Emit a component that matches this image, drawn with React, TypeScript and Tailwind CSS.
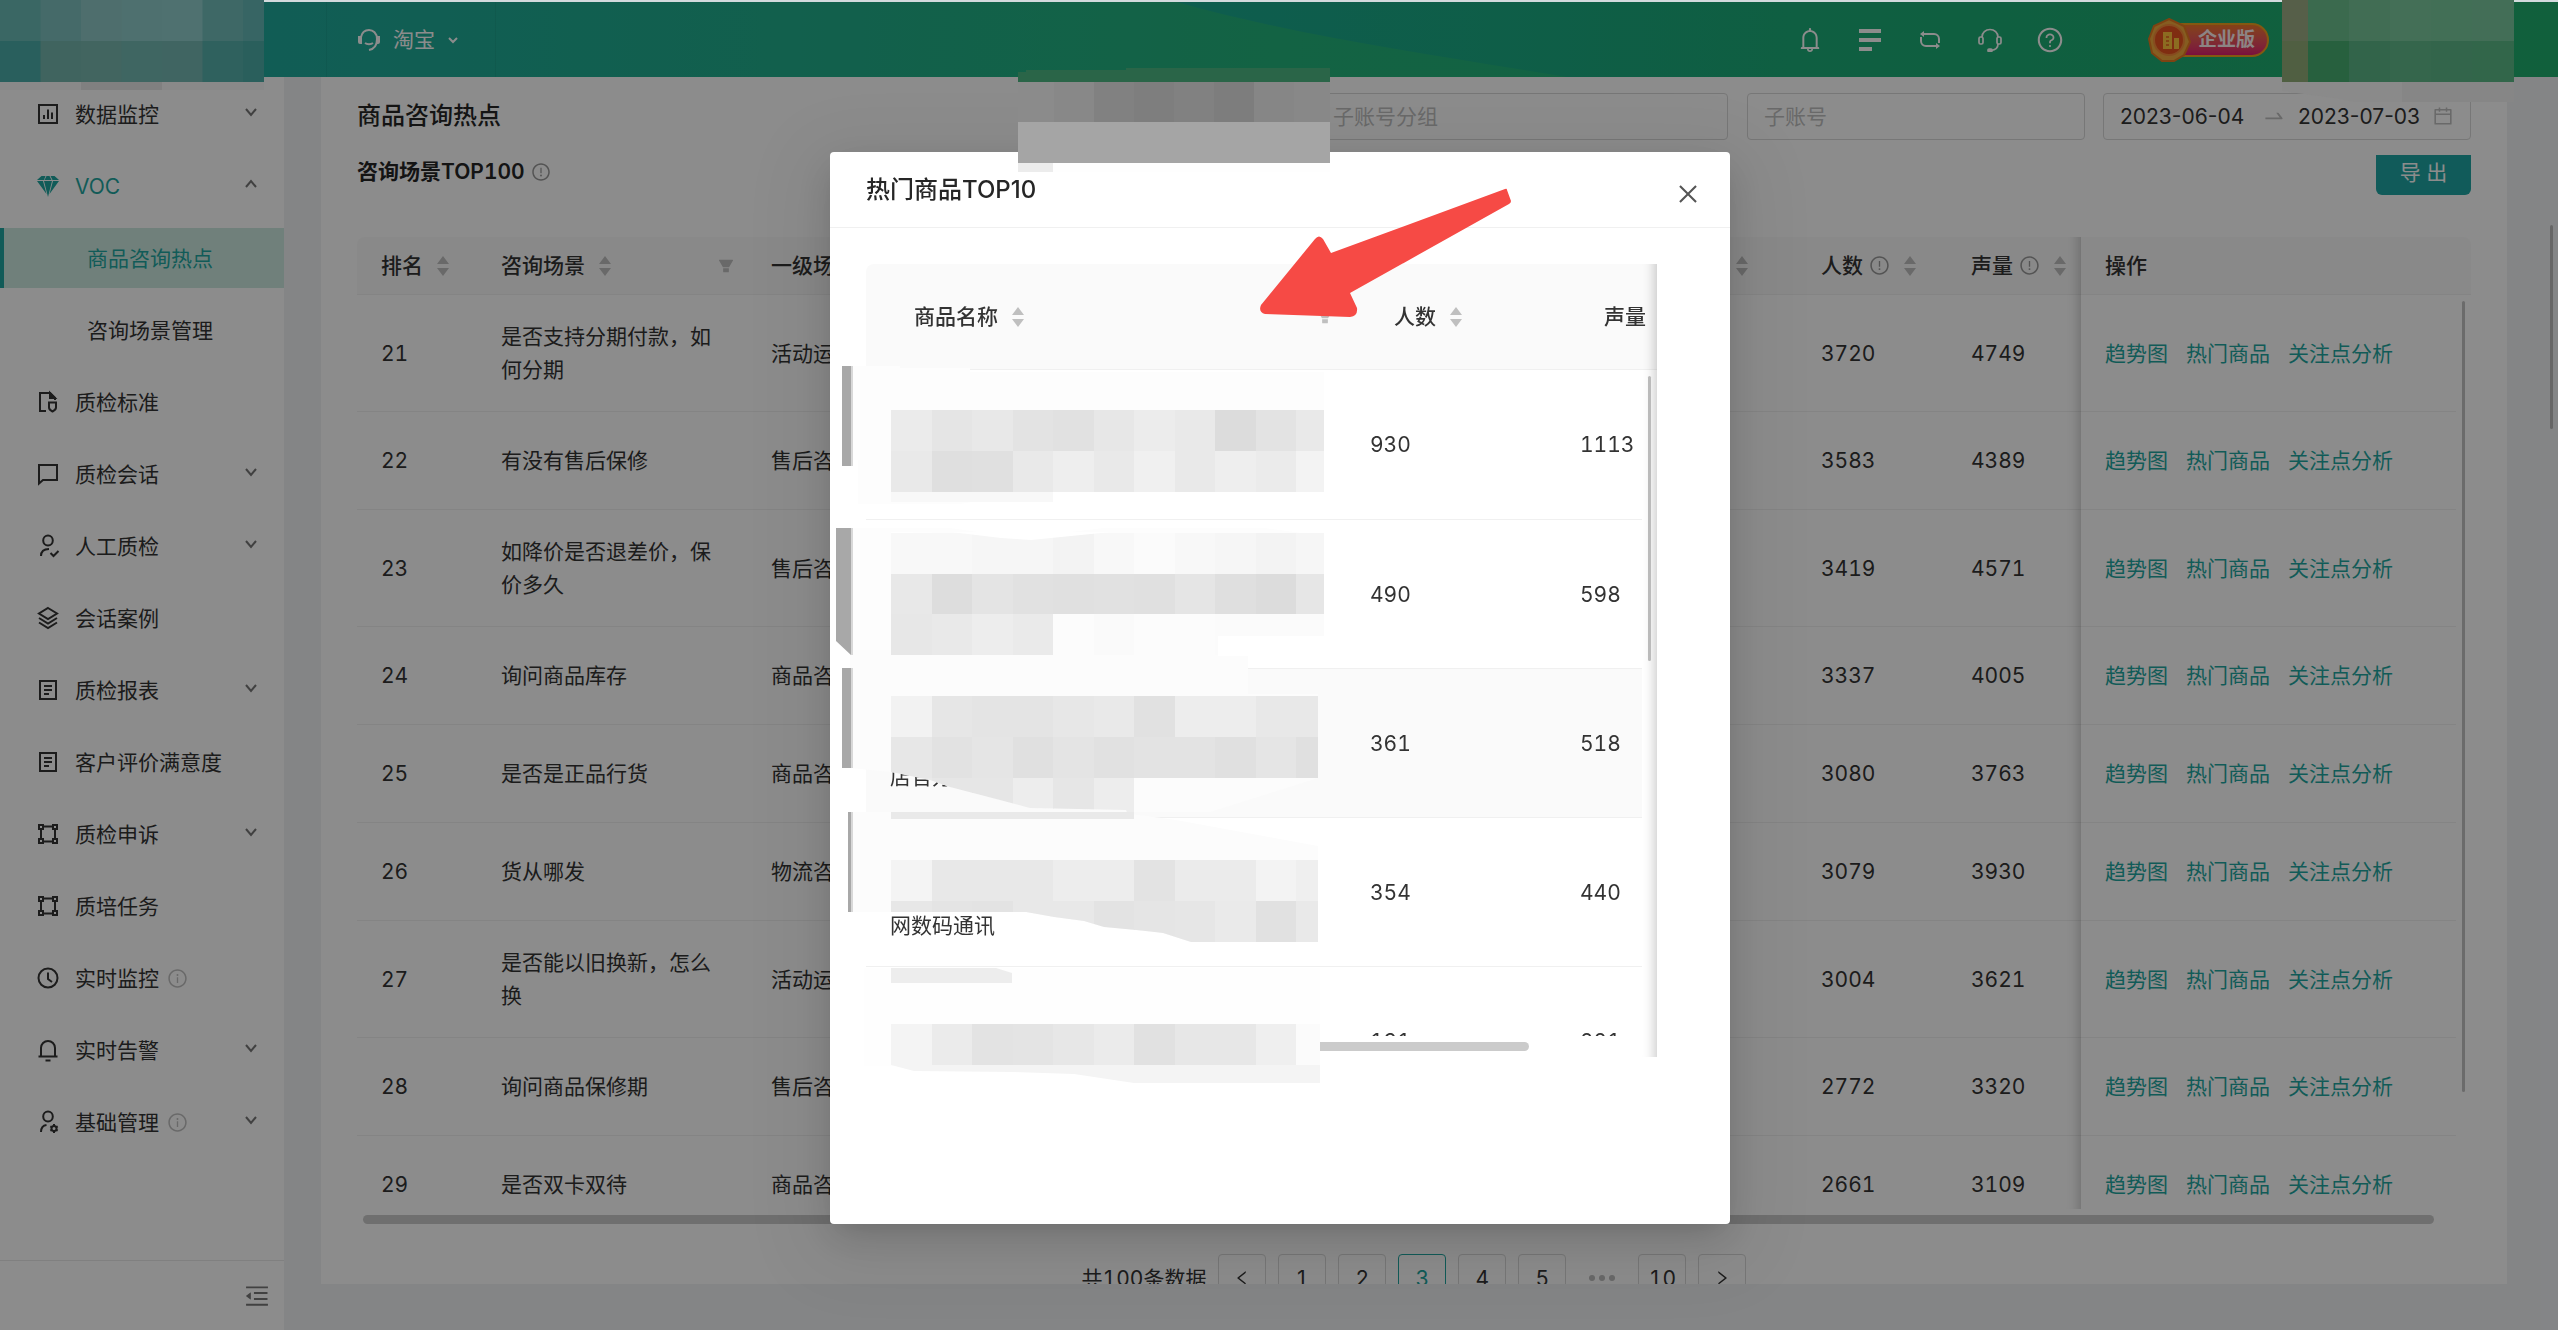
import type { ReactNode } from 'react'
import {
  AiFillFilter,
  AiOutlineBell,
  AiOutlineCalendar,
  AiOutlineClose,
  AiOutlineExclamationCircle,
  AiOutlineInfoCircle,
  AiOutlineLeft,
  AiOutlineMenuFold,
  AiOutlineQuestionCircle,
  AiOutlineRight,
  AiOutlineSwapRight,
} from 'react-icons/ai'

type IconName = 'chart' | 'gem' | 'shield' | 'chat' | 'userCheck' | 'stack' | 'doc' | 'shape' | 'clock' | 'bell' | 'userGear'

interface NavItem {
  label: string
  icon?: IconName
  arrow?: 'up' | 'down'
  info?: boolean
  active?: boolean
}

const NAV: NavItem[] = [
  { label: '数据监控', icon: 'chart', arrow: 'down' },
  { label: 'VOC', icon: 'gem', arrow: 'up', active: true },
  { label: '商品咨询热点', active: true },
  { label: '咨询场景管理' },
  { label: '质检标准', icon: 'shield' },
  { label: '质检会话', icon: 'chat', arrow: 'down' },
  { label: '人工质检', icon: 'userCheck', arrow: 'down' },
  { label: '会话案例', icon: 'stack' },
  { label: '质检报表', icon: 'doc', arrow: 'down' },
  { label: '客户评价满意度', icon: 'doc' },
  { label: '质检申诉', icon: 'shape', arrow: 'down' },
  { label: '质培任务', icon: 'shape' },
  { label: '实时监控', icon: 'clock', info: true },
  { label: '实时告警', icon: 'bell', arrow: 'down' },
  { label: '基础管理', icon: 'userGear', arrow: 'down', info: true },
]

const ROWS = [
  { rank: 21, scene: '是否支持分期付款，如何分期', parent: '活动运营', people: 3720, volume: 4749, tall: true },
  { rank: 22, scene: '有没有售后保修', parent: '售后咨询', people: 3583, volume: 4389 },
  { rank: 23, scene: '如降价是否退差价，保价多久', parent: '售后咨询', people: 3419, volume: 4571, tall: true },
  { rank: 24, scene: '询问商品库存', parent: '商品咨询', people: 3337, volume: 4005 },
  { rank: 25, scene: '是否是正品行货', parent: '商品咨询', people: 3080, volume: 3763 },
  { rank: 26, scene: '货从哪发', parent: '物流咨询', people: 3079, volume: 3930 },
  { rank: 27, scene: '是否能以旧换新，怎么换', parent: '活动运营', people: 3004, volume: 3621, tall: true },
  { rank: 28, scene: '询问商品保修期', parent: '售后咨询', people: 2772, volume: 3320 },
  { rank: 29, scene: '是否双卡双待', parent: '商品咨询', people: 2661, volume: 3109 },
]

const PRODUCTS = [
  { name: '', people: 930, volume: 1113 },
  { name: '', people: 490, volume: 598 },
  { name: '店官方', people: 361, volume: 518 },
  { name: '网数码通讯', people: 354, volume: 440 },
  { name: '', people: 191, volume: 221 },
]

const ICONS: Record<IconName, ReactNode> = {
  chart: (
    <>
      <rect x="3" y="3" width="18" height="18" />
      <path d="M8 13v4M12 7.500v9.500M16 10.500v6.500" />
    </>
  ),
  gem: (
    <g fill="currentColor" stroke="none">
      <path d="M5.500 2h4L8 6H1zM10.500 2h3l2 4h-7zM14.500 2h4L23 6h-6.500zM1 7h6l3.500 13zM8 7h8l-4 16zM17 7h6l-9.500 13z" />
    </g>
  ),
  shield: (
    <>
      <path d="M10 21H4V3h10l5 5v2" />
      <path d="M14 3v5h5z" fill="currentColor" />
      <path d="M13 12.500h7v5c0 2-1.500 3-3.500 4-2-1-3.500-2-3.500-4z" />
    </>
  ),
  chat: <path d="M3 3h18v15H7l-4 3.500z" />,
  userCheck: (
    <>
      <ellipse cx="12" cy="6.500" rx="4.800" ry="5" />
      <path d="M5 22c0-4.500 3-7 8-7M14.500 19l3 3 5-5" />
    </>
  ),
  stack: (
    <>
      <path d="M12 2l9 5.500-9 5.500-9-5.500z" />
      <path d="M3 12l9 5.500 9-5.500M3 16.500L12 22l9-5.500" />
    </>
  ),
  doc: (
    <>
      <rect x="4" y="3" width="16" height="18" />
      <path d="M8 8h8M8 12h8M8 16h5" />
    </>
  ),
  shape: (
    <>
      <path d="M7 4.500h10M7 19.500h10M5 7v10M19 7v10" />
      <path d="M3 3h4v4H3zM17 3h4v4h-4zM3 17h4v4H3zM17 17h4v4h-4z" />
    </>
  ),
  clock: (
    <>
      <circle cx="12" cy="12" r="9.500" />
      <path d="M12 6.500V13l4 3" />
    </>
  ),
  bell: (
    <>
      <path d="M5 18v-8a7 7 0 0 1 14 0v8M2.500 18.500h19" />
      <path d="M9.500 22.500h5" />
    </>
  ),
  userGear: (
    <>
      <ellipse cx="12" cy="6.500" rx="4.800" ry="5" />
      <path d="M5 22c0-4 2-6.500 5.500-7" />
      <circle cx="18" cy="18.500" r="2.500" />
      <path d="M18 14v2M18 21v2M14.300 16.300l1.500.9M20.200 19.800l1.500.9M21.700 16.300l-1.500.9M15.800 19.800l-1.500.9" />
    </>
  ),
}

function SideIcon({ name }: { name: IconName }) {
  return (
    <svg viewBox="0 0 24 24" className="h-6 w-6 fill-none stroke-current stroke-2" aria-hidden="true">
      {ICONS[name]}
    </svg>
  )
}

function Sorter() {
  return (
    <svg viewBox="0 0 12 20" className="h-5 w-3 shrink-0 fill-[#bfbfbf]" aria-hidden="true">
      <path d="M6 0l6 8H0zM6 20l6-8H0z" />
    </svg>
  )
}

function Caret({ dir }: { dir: 'up' | 'down' }) {
  return (
    <svg viewBox="0 0 12 12" className="mb-1 ml-auto h-3 w-3 fill-none stroke-[#777] stroke-2" aria-hidden="true">
      <path d={dir === 'down' ? 'M1 3l5 6 5-6' : 'M1 9l5-6 5 6'} />
    </svg>
  )
}

function Headset() {
  return (
    <svg viewBox="0 0 24 24" className="h-6 w-6 fill-none stroke-current stroke-[1.7]" aria-hidden="true">
      <path d="M4 9a8 7.500 0 0 1 16 0" />
      <rect x="1" y="9" width="4" height="7" rx="1.500" />
      <rect x="19" y="9" width="4" height="7" rx="1.500" />
      <path d="M20 16c0 4-2.500 6-7 6.500" />
      <rect x="10" y="21" width="4" height="2.500" rx="1" fill="currentColor" />
    </svg>
  )
}

function Badge() {
  return (
    <div className="flex items-center">
      <svg viewBox="0 0 44 46" className="relative z-10 h-[46px] w-11" aria-hidden="true">
        <path d="M21 2l15 7 6 16-6 13-10 6H14L4 36 1 22l5-13z" fill="#f2a93c" stroke="#e67a22" strokeWidth="2" />
        <circle cx="21" cy="23" r="15" fill="#e8521f" stroke="#f58a3a" strokeWidth="2" />
        <path d="M15 15h9v17h-9zM26 21h5v11h-5z" fill="#ffc53c" />
        <path d="M18 20h3M18 24h3M18 28h3" stroke="#e8601f" strokeWidth="1.500" />
      </svg>
      <span className="-ml-9 rounded-full border-2 border-[#f0a020] bg-linear-to-b from-[#f07828] to-[#e01870] pr-3 pl-10 text-[19px] leading-[30px] font-bold text-[#fff0f0]">
        企业版
      </span>
    </div>
  )
}

function Header() {
  return (
    <header className="relative z-10 flex h-[75px] shrink-0 items-center bg-linear-to-r from-[#1fa7a4] via-[#24b47c] to-[#21b271] text-white">
      {/* lighter wave across the right half */}
      <svg viewBox="0 0 1380 75" preserveAspectRatio="none" className="absolute top-0 right-0 h-full w-[54%]" aria-hidden="true">
        <defs>
          <linearGradient id="wave">
            <stop offset="0" stopColor="#1ba990" />
            <stop offset="0.450" stopColor="#1cad78" />
            <stop offset="1" stopColor="#20b06e" />
          </linearGradient>
        </defs>
        <path d="M0 0h1380v75H390C250 52 120 34 0 0z" fill="url(#wave)" />
      </svg>
      <div className="relative ml-[326px] flex h-full w-[170px] items-center border-x border-black/5 pl-[30px]">
        <svg viewBox="0 0 24 24" className="h-6 w-6 fill-none stroke-current stroke-2" aria-hidden="true">
          <path d="M4 9c1-4.500 4-7 8-7s8 3 8 9c0 6-3 10-8 11" />
          <path d="M1 8h4v8H3a2 2 0 0 1-2-2zM23 8h-3v8h1a2 2 0 0 0 2-2z" fill="currentColor" stroke="none" />
          <path d="M8 15c2 1.500 6 1.500 8 0" />
        </svg>
        <button className="ml-3 flex items-center gap-3">
          淘宝
          <svg viewBox="0 0 12 12" className="h-3 w-3 fill-none stroke-current stroke-2" aria-hidden="true">
            <path d="M2 4l4 4 4-4" />
          </svg>
        </button>
      </div>
      <div className="relative mr-[289px] ml-auto flex items-center gap-8">
        <button aria-label="通知"><AiOutlineBell size={28} /></button>
        <button aria-label="列表" className="w-7">
          <svg viewBox="0 0 24 24" className="mx-auto h-6 w-6 fill-current" aria-hidden="true">
            <path d="M1 1h22v4H1zM1 10h22v4H1zM1 19h13v4H1z" />
          </svg>
        </button>
        <button aria-label="切换" className="w-7">
          <svg viewBox="0 0 24 24" className="mx-auto h-6 w-6 fill-none stroke-current stroke-2" aria-hidden="true">
            <path d="M5 6h11a5 5 0 0 1 5 5v4M19 18H8a5 5 0 0 1-5-5V9" />
            <path d="M6 3v6L2 6zM18 15v6l4-3z" fill="currentColor" stroke="none" />
          </svg>
        </button>
        <button aria-label="客服" className="flex w-7 justify-center"><Headset /></button>
        <button aria-label="帮助"><AiOutlineQuestionCircle size={28} /></button>
        <div className="ml-13"><Badge /></div>
      </div>
    </header>
  )
}

function Sidebar() {
  return (
    <aside className="flex w-[284px] shrink-0 flex-col bg-white">
      <nav className="flex min-h-0 flex-1 flex-col gap-3 overflow-hidden pt-[7px]">
        {NAV.map((item) => (
          <a
            key={item.label}
            href="#"
            className={`flex h-15 shrink-0 items-center pr-[27px] ${item.active ? 'text-[#1fa7a0]' : 'text-[#333]'} ${
              item.icon ? 'pl-9' : item.active ? 'border-l-4 border-[#1fa7a0] bg-[#cce9e1] pl-[83px]' : 'pl-[87px]'
            }`}
          >
            {item.icon && <SideIcon name={item.icon} />}
            <span className={item.icon ? 'ml-[15px]' : ''}>{item.label}</span>
            {item.info && <AiOutlineInfoCircle size={21} className="ml-2 text-[#c0c0c0]" />}
            {item.arrow && <Caret dir={item.arrow} />}
          </a>
        ))}
      </nav>
      <div className="flex h-[70px] shrink-0 items-center justify-end border-t border-[#eaeaea] pr-[13px]">
        <button aria-label="收起菜单" className="text-[#777]"><AiOutlineMenuFold size={28} /></button>
      </div>
    </aside>
  )
}

function Filters() {
  return (
    <div className="flex h-[78px] shrink-0 items-center">
      <h1 className="mr-auto text-2xl font-medium text-[#262626]">商品咨询热点</h1>
      <input
        aria-label="子账号分组"
        placeholder="子账号分组"
        className="mr-[19px] h-[47px] w-[411px] rounded-sm border border-[#d9d9d9] px-[15px] placeholder:text-[#bfbfbf]"
      />
      <input
        aria-label="子账号"
        placeholder="子账号"
        className="mr-[18px] h-[47px] w-[338px] rounded-sm border border-[#d9d9d9] px-4 placeholder:text-[#bfbfbf]"
      />
      <div className="flex h-[47px] w-[368px] items-center rounded-sm border border-[#d9d9d9] px-4 normal-nums">
        <input aria-label="开始日期" defaultValue="2023-06-04" className="w-[142px]" />
        <AiOutlineSwapRight size={24} className="mr-3 shrink-0 text-[#bfbfbf]" />
        <input aria-label="结束日期" defaultValue="2023-07-03" className="w-[132px]" />
        <AiOutlineCalendar size={22} className="ml-auto shrink-0 text-[#bfbfbf]" />
      </div>
    </div>
  )
}

function SceneTable() {
  const th = 'border-b border-[#f0f0f0] bg-[#fafafa] pl-6 text-left font-medium'
  const td = 'border-b border-[#f0f0f0] pl-6'
  return (
    <div className="relative min-h-0 flex-1 overflow-hidden">
      <table className="w-full table-fixed border-separate border-spacing-0">
        <colgroup>
          <col className="w-[120px]" />
          <col className="w-[270px]" />
          <col className="w-[300px]" />
          <col />
          <col className="w-[150px]" />
          <col className="w-[134px]" />
          <col className="w-[375px]" />
          <col className="w-[15px]" />
        </colgroup>
        <thead>
          <tr className="h-[58px] whitespace-nowrap">
            <th className={`${th} rounded-tl-lg`}><span className="flex items-center gap-[14px]">排名<Sorter /></span></th>
            <th className={th}>
              <span className="flex items-center gap-[14px] pr-3">
                咨询场景<Sorter />
                <AiFillFilter size={18} className="ml-auto text-[#bfbfbf]" />
              </span>
            </th>
            <th className={th}>一级场景</th>
            <th className={th}><span className="flex justify-end pr-[49px]"><Sorter /></span></th>
            <th className={th}>
              <span className="flex items-center">
                人数<AiOutlineExclamationCircle size={21} className="mr-[14px] ml-1.5 text-[#999]" /><Sorter />
              </span>
            </th>
            <th className={th}>
              <span className="flex items-center">
                声量<AiOutlineExclamationCircle size={21} className="mr-[14px] ml-1.5 text-[#999]" /><Sorter />
              </span>
            </th>
            <th className={th}>操作</th>
            <th className={`${th} rounded-tr-lg`} />
          </tr>
        </thead>
        <tbody>
          {ROWS.map((r) => (
            <tr key={r.rank} className={r.tall ? 'h-[117px]' : 'h-[98px]'}>
              <td className={td}>{r.rank}</td>
              <td className={`${td} pr-8`}>{r.scene}</td>
              <td className={td}>{r.parent}</td>
              <td className={td} />
              <td className={td}>{r.people}</td>
              <td className={td}>{r.volume}</td>
              <td className={td}>
                <span className="flex gap-[18px] text-[#1fa7a0]">
                  <a href="#">趋势图</a>
                  <a href="#">热门商品</a>
                  <a href="#">关注点分析</a>
                </span>
              </td>
              <td />
            </tr>
          ))}
        </tbody>
      </table>
      <div className="pointer-events-none absolute inset-y-0 right-[390px] w-11 shadow-[inset_-15px_0_12px_-12px_rgba(0,0,0,0.2)]" />
      <div className="absolute top-16 right-1.5 h-[791px] w-[3px] rounded-full bg-[#c4c4c4]" />
    </div>
  )
}

function Pagination() {
  const btn = 'flex h-12 w-12 items-center justify-center rounded-sm border'
  return (
    <div className="flex h-[75px] shrink-0 flex-col gap-[30px] overflow-hidden pt-1.5">
      <div className="mr-[37px] ml-1.5 h-[9px] shrink-0 rounded-full bg-[#cbcbcb]" />
      <div className="flex items-center justify-center gap-3">
        <span>共100条数据</span>
        <button aria-label="上一页" className={`${btn} border-[#d9d9d9]`}><AiOutlineLeft size={18} /></button>
        {[1, 2, 3, 4, 5].map((n) => (
          <button key={n} className={`${btn} ${n === 3 ? 'border-[#1fa7a0] text-[#1fa7a0]' : 'border-[#d9d9d9]'}`}>{n}</button>
        ))}
        <span className="flex w-12 justify-center gap-1 text-[#bfbfbf]">
          <i className="h-1.5 w-1.5 rounded-full bg-current" />
          <i className="h-1.5 w-1.5 rounded-full bg-current" />
          <i className="h-1.5 w-1.5 rounded-full bg-current" />
        </span>
        <button className={`${btn} border-[#d9d9d9]`}>10</button>
        <button aria-label="下一页" className={`${btn} border-[#d9d9d9]`}><AiOutlineRight size={18} /></button>
      </div>
    </div>
  )
}

// pixelated strips that hide product names: y, right edge and one grey per cell
type StripRow = [number, number, string]

const STRIPS: StripRow[] = [
  [410, 1324, 'eb e5 e8 e3 e1 e7 ec e9 dc e3 e9'],
  [451, 1324, 'e9 df e0 e9 ee e9 f0 e9 ee eb f3'],
  [533, 1324, 'f8 f8 f6 f6 f3 f8 fb f8 f6 f3 f6'],
  [574, 1324, 'e8 dd e4 e1 e0 e1 e0 e5 df dc e6'],
  [614, 1324, 'e7 e9 ed ea fc fa fc fc fb fb fb'],
  [1024, 1320, 'f4 eb e3 e4 e7 eb e1 e7 e7 ef fb'],
]

// the lower edge of these two is cut on a slant, the last line of the name shows under it
const THIRD_STRIPS: StripRow[] = [
  [696, 1318, 'f2 e6 e4 e4 e7 e9 e1 ed ed e8 e8'],
  [737, 1318, 'e7 e2 e5 e0 e4 e1 e3 e3 e0 e5 e0'],
  [778, 1134, 'e9 e6 e6 ed e6 ed'],
]

const FOURTH_STRIPS: StripRow[] = [
  [860, 1318, 'f4 e8 e8 e8 ed ed e3 eb eb f3 ef'],
  [901, 1318, 'e7 e4 e3 e8 e8 e3 e5 e6 ea e1 e9'],
]

function Strip({ row: [y, right, greys] }: { row: StripRow }) {
  return (
    <>
      {greys.split(' ').map((g, i) => {
        const x = 891 + Math.round(i * 40.5)
        return <rect key={i} x={x} y={y} width={Math.min(41, right - x)} height={41} fill={`#${g}${g}${g}`} />
      })}
    </>
  )
}

function Redactions() {
  return (
    <svg
      viewBox="830 152 900 1072"
      className="pointer-events-none absolute top-0 left-0 h-[1072px] w-[900px] overflow-visible"
      aria-hidden="true"
    >
      <defs>
        <clipPath id="third">
          <path d="M842 650h482v169h-194l-4-9-96-2-30-8-50-13-20-7-39-8-41-4z" />
        </clipPath>
        <clipPath id="fourth">
          <path d="M842 812h482v130h-133l-28-9-27-3-32-3-20-6-30-4-28-5H842z" />
        </clipPath>
      </defs>
      <path d="M850 366h50v2h70v4h354v118H1040l-80 14H858V460h-8z" fill="#fdfdfd" />
      <path d="M850 528h100l70 10 84-10h160l60 8v100h-107v20h30v40H850z" fill="#fdfdfd" />
      <g clipPath="url(#third)">
        <path d="M850 650h398v44h70v84l-108 34H850z" fill="#fcfcfc" />
        {THIRD_STRIPS.map((row) => <Strip key={row[0]} row={row} />)}
      </g>
      <g clipPath="url(#fourth)">
        <path d="M850 812h266l60 8 142 26v100H850z" fill="#fcfcfc" />
        {FOURTH_STRIPS.map((row) => <Strip key={row[0]} row={row} />)}
      </g>
      <path d="M891 812h243v7H891z" fill="#e9e9e9" />
      <path d="M864 968h456v98H864z" fill="#fefefe" />
      <path d="M891 1065h429v18h-186l-60-9-60-2-100-1z" fill="#f4f4f4" />
      <path d="M842 366h9v100h-9zM836 528h15v127l-15-14zM842 668h9v100h-9zM848 812h3v100h-3z" fill="#a8a8a8" />
      <path d="M851 366h2v100h-2zM851 528h2v127h-2zM851 668h2v100h-2zM851 812h2v100h-2z" fill="#d8d8d8" />
      <path d="M891 492h162v10H891z" fill="#f8f8f8" />
      {STRIPS.map((row) => <Strip key={row[0]} row={row} />)}
      {/* ragged edges of the strips */}
      <path d="M1218 636h106v20h-106z" fill="#fff" />
      <path d="M891 533l60-1 50 6 30 2 40-4 40-4H891z" fill="#fff" />
      <path d="M891 968h105l16 5v10H891z" fill="#ededed" />
      <path
        d="M1261 305L1315 239Q1319 234 1323 239L1331 253L1505 189Q1507 188 1507 190L1511 201Q1511 203 1509 204L1350 293L1357 308Q1358 316 1350 317L1265 314Q1258 312 1261 305z"
        fill="#f64a45"
      />
    </svg>
  )
}

function HotProductsModal() {
  const td = 'border-b border-[#f0f0f0] pl-6'
  return (
    <div className="fixed inset-0 z-30 flex justify-center pt-[152px] pb-[106px] pl-0.5">
      <section
        role="dialog"
        aria-labelledby="hot-title"
        className="relative flex w-[900px] flex-col rounded-sm bg-white shadow-[0_9px_24px_-12px_rgba(0,0,0,0.12),0_14px_42px_rgba(0,0,0,0.12),0_18px_72px_24px_rgba(0,0,0,0.06)]"
      >
        <div className="flex h-[76px] shrink-0 items-center justify-between border-b border-[#f0f0f0] pr-[29px] pl-9">
          <h2 id="hot-title" className="text-2xl font-medium text-[#262626] normal-nums">热门商品TOP10</h2>
          <button aria-label="关闭" className="mt-2 text-[#555]"><AiOutlineClose size={26} /></button>
        </div>
        <div className="relative mt-9 ml-9 h-[793px] w-[791px] overflow-hidden">
          <div className="h-[772px] overflow-hidden">
            <table className="w-full table-fixed border-separate border-spacing-0">
              <colgroup>
                <col className="w-[480px]" />
                <col className="w-[210px]" />
                <col />
                <col className="w-[15px]" />
              </colgroup>
              <thead>
                <tr className="h-[106px] whitespace-nowrap [&>th]:border-b [&>th]:border-[#f0f0f0] [&>th]:bg-[#fafafa] [&>th]:text-left [&>th]:font-medium">
                  <th className="rounded-tl-lg pl-12">
                    <span className="flex items-center gap-[14px] pr-3">
                      商品名称<Sorter />
                      <AiFillFilter size={18} className="ml-auto text-[#bfbfbf]" />
                    </span>
                  </th>
                  <th className="pl-12"><span className="flex items-center gap-[14px]">人数<Sorter /></span></th>
                  <th className="pl-12">声量</th>
                  <th />
                </tr>
              </thead>
              <tbody>
                {PRODUCTS.map((p, i) => (
                  <tr key={p.people} className={`${i === 0 ? 'h-[150px]' : 'h-[149px]'} ${i === 2 ? 'bg-[#fafafa]' : ''}`}>
                    <td className={td}><span className="block pt-[66px] leading-[33px]">{p.name}</span></td>
                    <td className={td}>{p.people}</td>
                    <td className={td}>{p.volume}</td>
                    <td className="bg-white" />
                  </tr>
                ))}
              </tbody>
            </table>
          </div>
          <div className="mt-1.5 h-[9px] w-[663px] rounded-full bg-[#cbcbcb]" />
          <div className="pointer-events-none absolute inset-y-0 right-0 w-11 shadow-[inset_-15px_0_12px_-12px_rgba(0,0,0,0.2)]" />
          <div className="absolute top-28 right-1.5 h-[285px] w-[3px] rounded-full bg-[#bbb]" />
        </div>
        <Redactions />
      </section>
    </div>
  )
}

const LOGO_TOP = ['#3a6764', '#456a69', '#4e6e6d', '#4e706f', '#4f7170', '#3e6866', '#376564']
const LOGO_BOTTOM = ['#295f5d', '#40645f', '#426560', '#3f6662', '#406562', '#2f615e', '#2a5f5c']
const USER_TOP = ['#565f49', '#3b6a4e', '#416d54', '#446f57', '#426f56', '#436e57']
const USER_BOTTOM = ['#505f42', '#27603e', '#32644a', '#35664c', '#33654b', '#32664a']
const TAB_GREYS = ['#8b8b8b', '#888888', '#818181', '#7e7e7e', '#818181', '#7d7d7d', '#868686', '#888888']

function HeaderRedactions() {
  return (
    <div className="pointer-events-none absolute inset-x-0 top-0 z-40" aria-hidden="true">
      <svg viewBox="0 0 264 90" className="absolute top-0 left-0 h-[90px] w-[264px]">
        {LOGO_TOP.map((c, i) => <rect key={i} x={i * 40.5} y="0" width="41" height="41" fill={c} />)}
        {LOGO_BOTTOM.map((c, i) => <rect key={i} x={i * 40.5} y="41" width="41" height="41" fill={c} />)}
        <rect y="82" width="264" height="8" fill="#898989" />
        <rect x="81" y="82" width="81" height="8" fill="#808080" />
      </svg>
      <svg viewBox="0 0 312 104" className="absolute top-[68px] left-1/2 -ml-[261px] h-[104px] w-[312px]">
        <path d="M0 4h8V2h100V0h204v14H0z" fill="#2a6548" />
        {TAB_GREYS.map((c, i) => <rect key={i} x={i * 40 - (i ? 4 : 0)} y="14" width="41" height="41" fill={c} />)}
        <rect y="54" width="312" height="41" fill="#a5a5a5" />
        <rect y="95" width="312" height="9" fill="#fefefe" />
        <rect y="95" width="35" height="9" fill="#ececec" />
      </svg>
      <svg viewBox="0 0 232 102" className="absolute top-0 right-11 h-[102px] w-[232px]">
        {USER_TOP.map((c, i) => <rect key={i} x={i ? i * 41 - 15 : 0} y="0" width="42" height="41" fill={c} />)}
        {USER_BOTTOM.map((c, i) => <rect key={i} x={i ? i * 41 - 15 : 0} y="41" width="42" height="41" fill={c} />)}
        <path d="M0 82h232v20H72l-20-4-30-4-22-3z" fill="#8a8a8a" />
        <path d="M120 82h112v20H120z" fill="#868686" />
      </svg>
    </div>
  )
}

export default function App() {
  return (
    <div className="relative flex h-screen flex-col overflow-hidden bg-[#f0f2f5] font-[Inter,'Noto_Sans_CJK_SC',sans-serif] text-[21px] leading-[33px] text-[#333] tabular-nums">
      <div className="relative z-30 h-0.5 shrink-0 bg-[#d3dadd]" />
      <Header />
      <div className="flex min-h-0 flex-1">
        <Sidebar />
        <main className="mr-[51px] mb-[46px] ml-[37px] flex min-w-0 flex-1 flex-col bg-white px-9">
          <Filters />
          <div className="flex h-[82px] shrink-0 items-start overflow-hidden">
            <h2 className="flex items-center gap-1.5 font-semibold text-[#262626]">
              咨询场景TOP100
              <AiOutlineExclamationCircle size={20} className="text-[#999]" />
            </h2>
            <button className="ml-auto h-10 w-[95px] rounded-b-md bg-[#1fa7a4] pb-1.5 text-white">导 出</button>
          </div>
          <SceneTable />
          <Pagination />
        </main>
      </div>
      <div className="absolute top-[225px] right-[5px] h-[204px] w-[3px] rounded-full bg-[#bbb]" />
      <div className="absolute inset-0 z-20 bg-black/45" />
      <HotProductsModal />
      <HeaderRedactions />
    </div>
  )
}
